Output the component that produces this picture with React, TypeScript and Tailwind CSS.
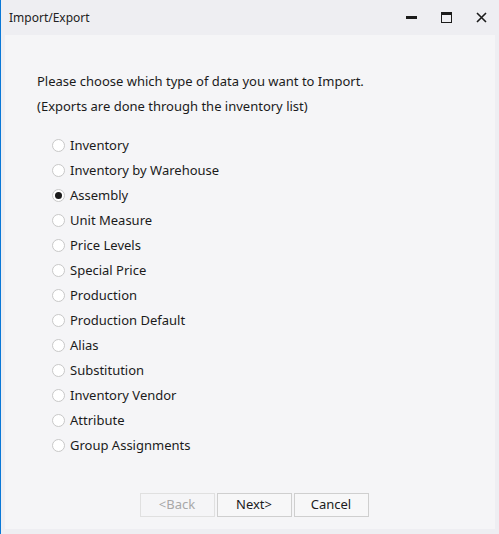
import { useState } from 'react'

const options = [
  'Inventory',
  'Inventory by Warehouse',
  'Assembly',
  'Unit Measure',
  'Price Levels',
  'Special Price',
  'Production',
  'Production Default',
  'Alias',
  'Substitution',
  'Inventory Vendor',
  'Attribute',
  'Group Assignments',
]

export default function App() {
  const [selected, setSelected] = useState('Assembly')

  return (
    <div
      className="w-[499px] h-[534px] flex flex-col bg-[#eeeef2] border-l border-[#0a78d7] text-[#1b1b1b] overflow-hidden"
      style={{ fontFamily: '"Segoe UI", "Noto Sans", "Open Sans", sans-serif' }}
    >
      {/* title bar */}
      <div className="h-[35px] flex items-center justify-between pl-[8px]">
        <span className="text-[12px] text-[#222]">Import/Export</span>
        <div className="flex items-center h-full">
          <button className="w-[35px] h-full flex items-center justify-center">
            <div className="w-[11px] h-[3px] bg-[#1b1b1b]" />
          </button>
          <button className="w-[35px] h-full flex items-center justify-center">
            <div className="w-[11px] h-[11px] border border-[#1b1b1b] border-t-[3px]" />
          </button>
          <button className="w-[35px] h-full flex items-center justify-center">
            <svg width="11" height="11" viewBox="0 0 11 11">
              <path d="M1 1 L10 10 M10 1 L1 10" stroke="#1b1b1b" strokeWidth="1.6" />
            </svg>
          </button>
        </div>
      </div>

      {/* content panel */}
      <div className="ml-[4px] mr-[4px] mb-[5px] flex-1 bg-[#f5f5f7] flex flex-col">
        <div className="pl-[32px] pt-[34px] text-[13px] leading-[25px]">
          <p>Please choose which type of data you want to Import.</p>
          <p>(Exports are done through the inventory list)</p>
        </div>

        <div className="pl-[47px] pt-[14px] flex flex-col">
          {options.map((opt) => (
            <label
              key={opt}
              className="h-[25px] flex items-center gap-[5px] text-[13px] cursor-default"
              onClick={() => setSelected(opt)}
            >
              <span className="w-[13px] h-[13px] rounded-full border border-[#c8c8c8] bg-white flex items-center justify-center">
                {selected === opt && <span className="w-[7px] h-[7px] rounded-full bg-[#1b1b1b]" />}
              </span>
              <span>{opt}</span>
            </label>
          ))}
        </div>

        <div className="mt-auto mb-[12px] flex justify-center gap-[2px] pl-[8px]">
          <button
            disabled
            className="w-[75px] h-[24px] text-[13px] border border-[#e0e0e0] bg-[#f5f5f7] text-[#a8a8a8]"
          >
            &lt;Back
          </button>
          <button className="w-[75px] h-[24px] text-[13px] border border-[#cfcfcf] bg-[#f7f7f8]">
            Next&gt;
          </button>
          <button className="w-[75px] h-[24px] text-[13px] border border-[#cfcfcf] bg-[#f7f7f8]">
            Cancel
          </button>
        </div>
      </div>
    </div>
  )
}
